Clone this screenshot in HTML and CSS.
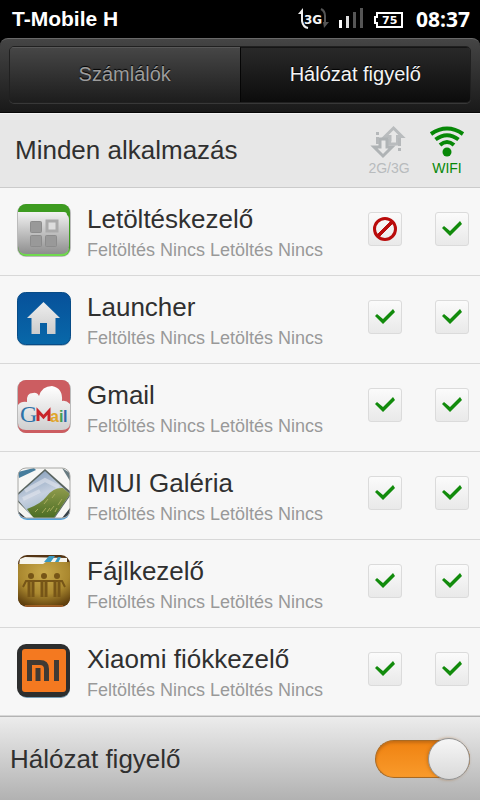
FILE: index.html
```html
<!DOCTYPE html>
<html lang="hu">
<head>
<meta charset="utf-8">
<meta name="viewport" content="width=device-width, initial-scale=1">
<title>Hálózat figyelő</title>
<link rel="stylesheet" href="styles.css">
</head>
<body>
<div class="status">
  <span class="carrier">T-Mobile H</span>
  <svg class="status-icons" viewBox="0 0 110 28">
    <path d="M4 10V20Q5 26 10 27" fill="none" stroke="#eee" stroke-width="2"/>
    <path d="M0 13L5 7V13Z" fill="#eee"/>
    <text class="badge-text" x="6" y="23">3G</text>
    <path d="M23 8Q27 10 27 15V24" fill="none" stroke="#555" stroke-width="2"/>
    <path d="M25 21H31L26 27Z" fill="#555"/>
    <path d="M41 19h3v8h-3z" fill="#fff"/><path d="M48 15h3v12h-3z" fill="#ddd"/>
    <path d="M55 11h3v16h-3zM62 7h3v20h-3z" fill="#555"/>
    <path d="M79 12H104V26H79V22H77V16H79Z" fill="none" stroke="#fff" stroke-width="2"/>
    <text class="battery-text" x="84" y="23">75</text>
  </svg>
  <time class="clock">08:37</time>
</div>

<nav class="tabs">
  <div class="tab-group">
    <button class="tab" type="button">Számlálók</button>
    <button class="tab tab-active" type="button" aria-pressed="true">Hálózat figyelő</button>
  </div>
</nav>

<main class="content">
  <header class="heading">
    <h1 class="title">Minden alkalmazás</h1>
    <div class="network network-off">
      <svg class="network-icon" viewBox="0 0 42 36" aria-hidden="true">
        <path d="M25.500 4L34 12.500H29.500V20H21.500V16H22V12.500H17Z" fill="#e7e7e7" stroke="#b9bcbe" stroke-width="3"/>
        <path d="M12 15H19V23H24L15 32L6 23H12Z" fill="#e7e7e7" stroke="#afb3b5" stroke-width="3"/>
        <path d="M8 8h3v3H8zM8 13h3v7H8zM30 14h3v8h-3zM30 24h3v3h-3z" fill="#b5b8ba"/>
      </svg>
      <span>2G/3G</span>
    </div>
    <div class="network network-on">
      <svg class="network-icon" viewBox="0 0 42 36" aria-hidden="true">
        <circle cx="21" cy="28" r="4.500" fill="#078807"/>
        <path d="M5 10Q21-1 37 10M9.500 15.500Q21 7 32.500 15.500M14 21Q21 15 28 21" fill="none" stroke="#078807" stroke-width="4"/>
      </svg>
      <span>WIFI</span>
    </div>
  </header>

  <ul class="apps">
    <li class="app">
      <svg class="app-icon" viewBox="0 0 56 56" aria-hidden="true">
        <defs><linearGradient id="steel" x2="0" y2="1"><stop offset="0" stop-color="#f2f2f2"/><stop offset="1" stop-color="#8e8e8e"/></linearGradient></defs>
        <rect x="1" y="2" width="54" height="53" rx="9" fill="#bbb"/>
        <rect x="2" y="2" width="52" height="52" rx="8" fill="#3d9b20"/>
        <path d="M3 46H53Q53 54 46 54H10Q3 54 3 46" fill="#70d94e"/>
        <path d="M2 10H48Q51 10 51 13Q53 14 53 18V44Q53 52 45 52H10Q2 52 2 44Z" fill="url(#steel)"/>
        <g fill="#999" stroke="#8c8c8c"><rect x="14.500" y="19.500" width="11" height="11" rx="1"/><rect x="14.500" y="33.500" width="11" height="11" rx="1"/><rect x="29.500" y="33.500" width="11" height="11" rx="1"/></g>
        <rect x="31" y="19" width="10" height="10" fill="#ddd" stroke="#aaa" stroke-width="3"/>
      </svg>
      <div class="app-text"><h2 class="app-name">Letöltéskezelő</h2><p class="app-usage">Feltöltés Nincs Letöltés Nincs</p></div>
      <input class="allow" type="checkbox" aria-label="Letöltéskezelő 2G/3G">
      <input class="allow" type="checkbox" checked aria-label="Letöltéskezelő WIFI">
    </li>
    <li class="app">
      <svg class="app-icon" viewBox="0 0 56 56" aria-hidden="true">
        <defs><linearGradient id="blue" x2="0" y2="1"><stop offset="0" stop-color="#07519a"/><stop offset="1" stop-color="#0868a9"/></linearGradient><linearGradient id="house" x2="0" y2="1"><stop offset="0" stop-color="#eee"/><stop offset="1" stop-color="#ccc"/></linearGradient></defs>
        <rect x="1" y="3" width="54" height="53" rx="9" fill="#a9bcc9"/>
        <rect x="1.500" y="2.500" width="53" height="52" rx="8" fill="url(#blue)" stroke="#084c87"/>
        <path d="M27.500 12L44 28H39.500V44H31V33H24V44H15.500V28H11Z" fill="url(#house)"/>
      </svg>
      <div class="app-text"><h2 class="app-name">Launcher</h2><p class="app-usage">Feltöltés Nincs Letöltés Nincs</p></div>
      <input class="allow" type="checkbox" checked aria-label="Launcher 2G/3G">
      <input class="allow" type="checkbox" checked aria-label="Launcher WIFI">
    </li>
    <li class="app">
      <svg class="app-icon" viewBox="0 0 56 56" aria-hidden="true">
        <defs><linearGradient id="cloud" x2="0" y2="1"><stop offset="0" stop-color="#fff"/><stop offset="1" stop-color="#cfcfcf"/></linearGradient></defs>
        <rect x="1" y="2" width="54" height="53" rx="9" fill="#bbb"/>
        <rect x="2" y="2" width="52" height="53" rx="8" fill="#cc5d61"/>
        <path d="M2 27Q5 23 11 24Q10 15 17 15Q21 14 23 18Q26 8 36 8Q47 10 46 23Q50 22 54 26V45Q54 52 46 52H10Q2 52 2 45Z" fill="url(#cloud)"/>
        <text class="g-letter" x="4" y="44" fill="#2e73a8">G</text>
        <path d="M22 43V33L27.500 39L33 33V43" fill="none" stroke="#c9252b" stroke-width="3"/>
        <text class="mail-letters" y="44"><tspan x="34" fill="#e0a528">a</tspan><tspan x="43" fill="#42a050">i</tspan><tspan x="47" fill="#3465a9">l</tspan></text>
      </svg>
      <div class="app-text"><h2 class="app-name">Gmail</h2><p class="app-usage">Feltöltés Nincs Letöltés Nincs</p></div>
      <input class="allow" type="checkbox" checked aria-label="Gmail 2G/3G">
      <input class="allow" type="checkbox" checked aria-label="Gmail WIFI">
    </li>
    <li class="app">
      <svg class="app-icon" viewBox="0 0 56 56" aria-hidden="true">
        <defs>
          <clipPath id="tile"><rect x="2" y="2" width="52" height="50" rx="8"/></clipPath>
          <linearGradient id="sky" x1=".2" y1="0" x2=".6" y2="1"><stop offset="0" stop-color="#829cb9"/><stop offset=".5" stop-color="#c6d0df"/><stop offset="1" stop-color="#8dabc0"/></linearGradient>
          <linearGradient id="grass" x2="0" y2="1"><stop offset="0" stop-color="#8f9b4c"/><stop offset="1" stop-color="#486b22"/></linearGradient>
        </defs>
        <rect x="2" y="3" width="52" height="51" rx="9" fill="#54a3dc"/>
        <g clip-path="url(#tile)">
          <path d="M0 0H56V56H0Z" fill="#f7f7f5"/>
          <path d="M2 6L18 2L20 4L3 12Z" fill="#467d9c"/>
          <path d="M46 2L54 7V15Z" fill="#687b80"/>
          <path d="M29 3L56 27L38 53H17L1 35V28Z" fill="#59645f"/>
          <path d="M29 5L54 28L37 53H18L2 34V29Z" fill="url(#sky)"/>
          <path d="M9 25L29 14L43 21M7 33L24 25" fill="none" stroke="#e1e4ed" stroke-width="4" opacity=".6"/>
          <path d="M11 43Q25 38 31 30Q38 21 47 22L54 28L37 53H18Z" fill="url(#grass)"/>
          <path d="M19 46l3-3m4 4l4-5m-2-4l4-5m2 12l4-5m-2-8l3-4m3 11l4-6m-7 13l2-4m-10 4l3-4" stroke="#a7ab5c" stroke-width="1"/>
          <path d="M2 45L10 52H2ZM54 42L46 52H54Z" fill="#38434a"/>
          <path d="M2 36L18 52H12L2 43Z" fill="#f3f3ef"/>
        </g>
        <rect x="2" y="2" width="52" height="50" rx="8" fill="none" stroke="#a8a8a5"/>
      </svg>
      <div class="app-text"><h2 class="app-name">MIUI Galéria</h2><p class="app-usage">Feltöltés Nincs Letöltés Nincs</p></div>
      <input class="allow" type="checkbox" checked aria-label="MIUI Galéria 2G/3G">
      <input class="allow" type="checkbox" checked aria-label="MIUI Galéria WIFI">
    </li>
    <li class="app">
      <svg class="app-icon" viewBox="0 0 56 56" aria-hidden="true">
        <defs><radialGradient id="gold" cx=".5" cy=".25" r=".8"><stop offset="0" stop-color="#c9aa4b"/><stop offset=".6" stop-color="#aa882f"/><stop offset="1" stop-color="#60400e"/></radialGradient></defs>
        <rect x="2" y="1" width="52" height="52" rx="9" fill="#543515"/>
        <path d="M4 5L9 3L51 4V12H3Z" fill="#f5f4ed"/>
        <path d="M28 8L33 2H39L34 9M39 8L42 3H45L42 9" fill="#3a9ac1"/>
        <path d="M2 10H27L30 8H54V43Q54 52 45 52H11Q2 52 2 43Z" fill="url(#gold)"/>
        <g fill="#765517"><circle cx="15" cy="22" r="3"/><circle cx="28" cy="22" r="3"/><circle cx="41" cy="22" r="3"/></g>
        <g fill="none" stroke="#765517"><path d="M7 33L10 27H46L49 33" stroke-width="2"/><path d="M13 26V43M17 26V43M26 26V43M30 26V43M39 26V43M43 26V43" stroke-width="3"/></g>
        <path d="M9 52H47" stroke="#d77b36"/>
      </svg>
      <div class="app-text"><h2 class="app-name">Fájlkezelő</h2><p class="app-usage">Feltöltés Nincs Letöltés Nincs</p></div>
      <input class="allow" type="checkbox" checked aria-label="Fájlkezelő 2G/3G">
      <input class="allow" type="checkbox" checked aria-label="Fájlkezelő WIFI">
    </li>
    <li class="app">
      <svg class="app-icon" viewBox="0 0 56 56" aria-hidden="true">
        <rect x="2" y="4" width="52" height="52" rx="9" fill="#799eb5"/>
        <rect x="1" y="2" width="53" height="53" rx="9" fill="#2d2e2e"/>
        <rect x="6" y="7" width="44" height="43" rx="3" fill="#f47920"/>
        <path d="M13.500 39V20.500H24Q30.500 20.500 30.500 27V39M22 26V39M40.500 18V39" fill="none" stroke="#403a34" stroke-width="5"/>
      </svg>
      <div class="app-text"><h2 class="app-name">Xiaomi fiókkezelő</h2><p class="app-usage">Feltöltés Nincs Letöltés Nincs</p></div>
      <input class="allow" type="checkbox" checked aria-label="Xiaomi fiókkezelő 2G/3G">
      <input class="allow" type="checkbox" checked aria-label="Xiaomi fiókkezelő WIFI">
    </li>
  </ul>
</main>

<footer class="monitor">
  <label for="monitor">Hálózat figyelő</label>
  <input class="switch" id="monitor" type="checkbox" role="switch" checked>
</footer>
</body>
</html>
```
FILE: styles.css
```css
* { box-sizing: border-box; }

body {
  margin: 0;
  min-height: 100vh;
  display: flex;
  flex-direction: column;
  background: #000;
  color: #303030;
  font-family: "Liberation Sans", Arial, sans-serif;
}

h1, h2, p, ul { margin: 0; padding: 0; font-weight: 400; }

.status {
  height: 38px;
  display: flex;
  align-items: center;
  padding: 0 10px 0 12px;
  color: #fff;
  font-size: 21px;
  font-weight: 700;
}
.carrier { flex: 1; }
.status-icons { width: 110px; height: 28px; margin: 0 8px 8px 0; }
.badge-text { font: 700 12px "DejaVu Sans", sans-serif; fill: #f4f4f4; }
.battery-text { font: 700 11px "DejaVu Sans", sans-serif; fill: #fff; }
.clock { font-family: "Open Sans", "Noto Sans", sans-serif; font-size: 21px; }

.tabs {
  padding: 7px 9px 9px;
  border-top: 1px solid #696969;
  border-bottom: 1px solid #080808;
  border-radius: 8px 8px 0 0;
  background: linear-gradient(#454545, #191919);
}
.tab-group {
  display: flex;
  border: 1px solid #202020;
  border-radius: 5px;
  box-shadow: 0 1px #383838;
  overflow: hidden;
}
.tab {
  flex: 1;
  height: 55px;
  padding: 0 0 2px;
  border: 0;
  border-top: 1px solid #585858;
  background: linear-gradient(#464646, #1d1d1d);
  color: #9c9c9c;
  font: inherit;
  font-size: 20px;
  text-shadow: 0 -1px 1px #000;
}
.tab-active {
  border-top-color: #151515;
  border-left: 1px solid #050505;
  background: linear-gradient(#292929, #0c0c0c);
  color: #f4f4f4;
}

.content { flex: 1; background: #f7f7f7; }

.heading {
  height: 75px;
  display: flex;
  align-items: center;
  gap: 16px;
  padding: 0 12px 2px 15px;
  border-top: 1px solid #f4f4f4;
  border-bottom: 1px solid #cbcbcb;
  background: #e7e7e7;
}
.title { flex: 1; font-size: 26px; line-height: 30px; }
.network {
  width: 42px;
  display: flex;
  flex-direction: column;
  align-items: center;
  font-size: 14px;
  line-height: 16px;
}
.network-icon { width: 42px; height: 36px; }
.network-off { color: #b8bbbd; }
.network-on { color: #078807; }

.apps { list-style: none; }
.app {
  height: 88px;
  display: flex;
  align-items: flex-start;
  padding: 14px 11px 0 16px;
  border-bottom: 1px solid #d8d8d8;
}
.app-icon { width: 56px; height: 56px; }
.app-text { flex: 1; padding: 2px 0 0 15px; }
.app-name { font-size: 26px; line-height: 30px; }
.app-usage { color: #999; font-size: 18px; line-height: 32px; }
.g-letter { font: 24px "Liberation Serif", serif; }
.mail-letters { font: 700 16px "Liberation Sans", sans-serif; }

.allow {
  appearance: none;
  display: grid;
  place-items: center;
  width: 34px;
  height: 34px;
  margin: 10px 0 0;
  border: 1px solid #dbdbdb;
  border-radius: 3px;
  background: linear-gradient(#fbfbfb, #e9e9e9);
}
.allow + .allow { margin-left: 33px; }
.allow::before {
  content: "";
  box-sizing: border-box;
  width: 24px;
  height: 24px;
  border: 3px solid #b90b0b;
  border-radius: 50%;
  background: linear-gradient(135deg, transparent 43%, #b90b0b 44%, #b90b0b 56%, transparent 57%);
}
.allow:checked::before {
  border: 0;
  border-radius: 0;
  background: #128b0c;
  clip-path: polygon(2px 11px, 4px 9px, 10px 14px, 20px 4px, 22px 7px, 10px 19px);
}

.monitor {
  height: 85px;
  display: flex;
  align-items: center;
  justify-content: space-between;
  padding: 0 10px;
  border-top: 1px solid #b4b4b4;
  background: linear-gradient(#ececec, #b1b1b1);
  font-size: 26px;
}
.switch {
  appearance: none;
  display: flex;
  align-items: center;
  justify-content: flex-end;
  width: 95px;
  height: 38px;
  margin: 0;
  border: 1px solid #a86a24;
  border-right: 0;
  border-radius: 19px;
  background: linear-gradient(#ef8211, #f99a2b);
  box-shadow: inset 0 2px 3px #c66c13;
}
.switch::before {
  content: "";
  box-sizing: border-box;
  flex: none;
  width: 42px;
  height: 42px;
  border: 1px solid #929292;
  border-radius: 50%;
  background: linear-gradient(#f6f6f6, #d9d9d9);
  box-shadow: -1px 0 3px #a45b1680;
}
.switch:not(:checked) { justify-content: flex-start; background: #aaa; }
```
